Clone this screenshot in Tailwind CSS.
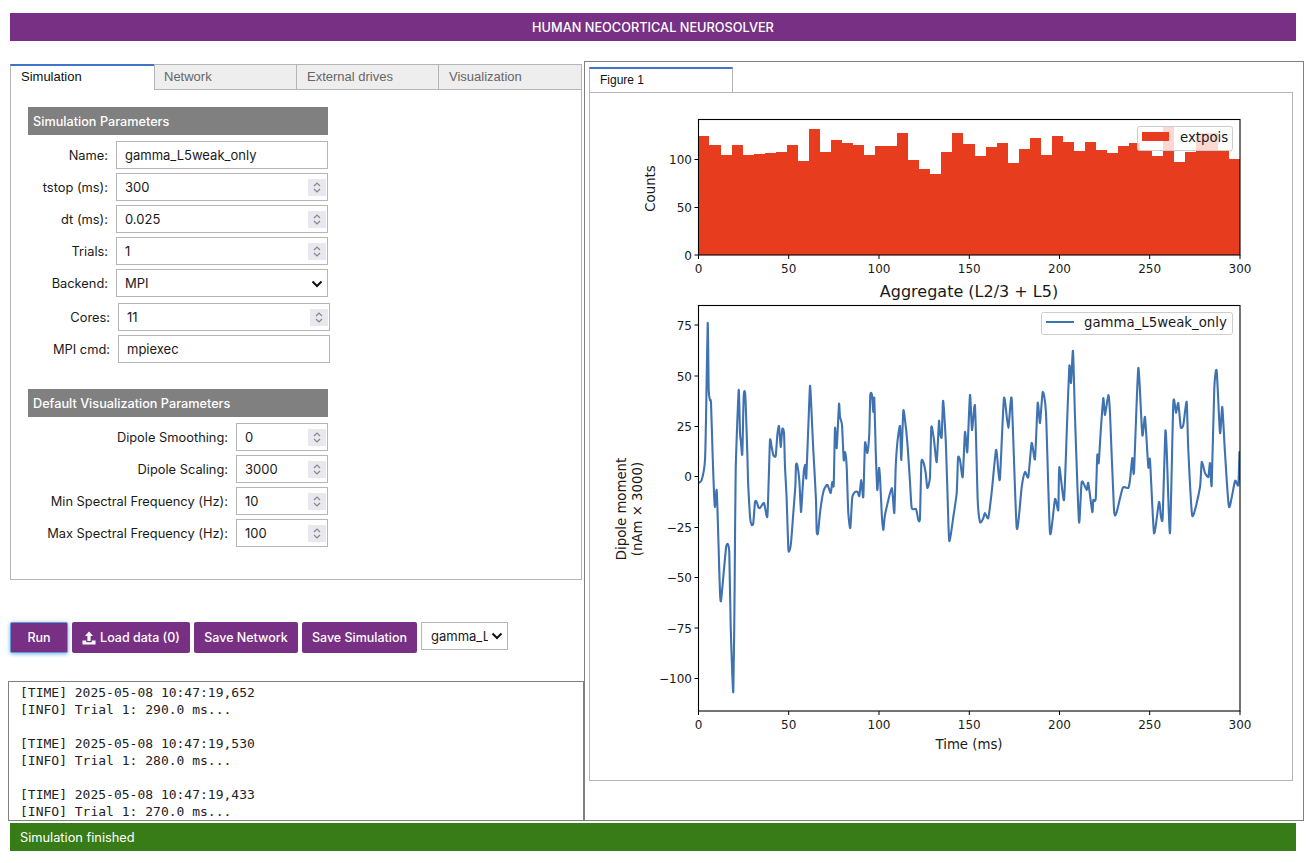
<!DOCTYPE html>
<html lang="en">
  <head>
    <script src="https://cdn.jsdelivr.net/npm/@tailwindcss/browser@4"></script>
    <meta charset="UTF-8" />
    <title>Human Neocortical Neurosolver</title>
  </head>
  <body class="bg-white text-[13px] text-[#1a1a1a]" style="font-family: Inter, 'Liberation Sans', sans-serif">
    <div class="w-[1310px] h-[863px] overflow-hidden flex flex-col">
      <!-- header -->
      <div class="mt-[13px] ml-[10px] w-[1286px] h-[28px] bg-[#783085] text-white font-medium flex items-center justify-center text-[12.75px] pt-px">HUMAN NEOCORTICAL NEUROSOLVER</div>

      <div class="flex h-[760px] mt-[20px]">
        <!-- left column -->
        <div class="w-[576px] ml-[8px] shrink-0 flex flex-col">
          <div class="ml-[2px] w-[572px] mt-[3px] h-[517px] flex flex-col">
            <div class="flex h-[26px] shrink-0 text-[#666]" style="font-family: 'Liberation Sans', sans-serif">
              <div class="w-[144px] border-t-2 border-t-[#3f74c8] border-l border-l-[#b5b5b5] pl-[10px] pt-[1px] text-[#111] bg-white">Simulation</div>
              <div class="w-[143px] bg-[#eeeeee] border border-[#b5b5b5] pl-[9px] pt-[2px]">Network</div>
              <div class="w-[142px] bg-[#eeeeee] border border-l-0 border-[#b5b5b5] pl-[10px] pt-[2px]">External drives</div>
              <div class="w-[143px] bg-[#eeeeee] border border-l-0 border-[#b5b5b5] pl-[10px] pt-[2px]">Visualization</div>
            </div>
            <div class="flex-1 border border-t-0 border-[#b5b5b5] pl-[17px] pt-[17px]">
              <div class="w-[300px] h-[28px] bg-[#808080] text-white font-medium flex items-center pl-[5px] pt-[2px] text-[12.7px]">Simulation Parameters</div>
              <div class="flex flex-col gap-[4px] mt-[6px]">
                <div class="flex items-center h-[28px]">
                  <div class="w-[88px] text-right pr-[8px] pt-px text-[12.85px]">Name:</div>
                  <div class="w-[212px] h-[28px] border border-[#b5b5b5] flex items-center pl-[8px] pt-px">gamma_L5weak_only</div>
                </div>
                <div class="flex items-center h-[28px]">
                  <div class="w-[88px] text-right pr-[8px] pt-px text-[12.85px]">tstop (ms):</div>
                  <div class="w-[212px] h-[28px] border border-[#b5b5b5] flex items-center justify-between pl-[8px] pr-[1px] pt-px">300
                    <div class="w-[18px] h-[17px] bg-[#e8e8ee] flex items-center justify-center"><svg width="10" height="15" viewBox="0 0 10 15" fill="none" stroke="#85858c" stroke-width="1.2"><path d="M2 6l3-3 3 3M2 9l3 3 3-3"/></svg></div>
                  </div>
                </div>
                <div class="flex items-center h-[28px]">
                  <div class="w-[88px] text-right pr-[8px] pt-px text-[12.85px]">dt (ms):</div>
                  <div class="w-[212px] h-[28px] border border-[#b5b5b5] flex items-center justify-between pl-[8px] pr-[1px] pt-px">0.025
                    <div class="w-[18px] h-[17px] bg-[#e8e8ee] flex items-center justify-center"><svg width="10" height="15" viewBox="0 0 10 15" fill="none" stroke="#85858c" stroke-width="1.2"><path d="M2 6l3-3 3 3M2 9l3 3 3-3"/></svg></div>
                  </div>
                </div>
                <div class="flex items-center h-[28px]">
                  <div class="w-[88px] text-right pr-[8px] pt-px text-[12.85px]">Trials:</div>
                  <div class="w-[212px] h-[28px] border border-[#b5b5b5] flex items-center justify-between pl-[8px] pr-[1px] pt-px">1
                    <div class="w-[18px] h-[17px] bg-[#e8e8ee] flex items-center justify-center"><svg width="10" height="15" viewBox="0 0 10 15" fill="none" stroke="#85858c" stroke-width="1.2"><path d="M2 6l3-3 3 3M2 9l3 3 3-3"/></svg></div>
                  </div>
                </div>
                <div class="flex items-center h-[28px]">
                  <div class="w-[88px] text-right pr-[8px] pt-px text-[12.85px]">Backend:</div>
                  <div class="w-[212px] h-[28px] border border-[#b5b5b5] flex items-center justify-between pl-[8px] pr-[4px] pt-px">MPI
                    <svg width="12" height="10" viewBox="0 0 12 10" fill="none" stroke="#111" stroke-width="2"><path d="M1.5 2.5L6 7l4.5-4.5"/></svg>
                  </div>
                </div>
                <div class="flex items-center h-[28px] mt-[2px]">
                  <div class="w-[90px] text-right pr-[8px] pt-px text-[12.85px]">Cores:</div>
                  <div class="w-[212px] h-[28px] border border-[#b5b5b5] flex items-center justify-between pl-[8px] pr-[1px] pt-px">11
                    <div class="w-[18px] h-[17px] bg-[#e8e8ee] flex items-center justify-center"><svg width="10" height="15" viewBox="0 0 10 15" fill="none" stroke="#85858c" stroke-width="1.2"><path d="M2 6l3-3 3 3M2 9l3 3 3-3"/></svg></div>
                  </div>
                </div>
                <div class="flex items-center h-[28px]">
                  <div class="w-[90px] text-right pr-[8px] pt-px text-[12.85px]">MPI cmd:</div>
                  <div class="w-[212px] h-[28px] border border-[#b5b5b5] flex items-center pl-[8px] pt-px">mpiexec</div>
                </div>
              </div>
              <div class="w-[300px] h-[28px] bg-[#808080] text-white font-medium flex items-center pl-[5px] pt-[2px] mt-[26px] text-[12.7px]">Default Visualization Parameters</div>
              <div class="flex flex-col gap-[4px] mt-[6px]">
                <div class="flex items-center h-[28px]">
                  <div class="w-[208px] text-right pr-[8px] pt-px text-[12.85px]">Dipole Smoothing:</div>
                  <div class="w-[92px] h-[28px] border border-[#b5b5b5] flex items-center justify-between pl-[8px] pr-[1px] pt-px">0
                    <div class="w-[18px] h-[17px] bg-[#e8e8ee] flex items-center justify-center"><svg width="10" height="15" viewBox="0 0 10 15" fill="none" stroke="#85858c" stroke-width="1.2"><path d="M2 6l3-3 3 3M2 9l3 3 3-3"/></svg></div>
                  </div>
                </div>
                <div class="flex items-center h-[28px]">
                  <div class="w-[208px] text-right pr-[8px] pt-px text-[12.85px]">Dipole Scaling:</div>
                  <div class="w-[92px] h-[28px] border border-[#b5b5b5] flex items-center justify-between pl-[8px] pr-[1px] pt-px">3000
                    <div class="w-[18px] h-[17px] bg-[#e8e8ee] flex items-center justify-center"><svg width="10" height="15" viewBox="0 0 10 15" fill="none" stroke="#85858c" stroke-width="1.2"><path d="M2 6l3-3 3 3M2 9l3 3 3-3"/></svg></div>
                  </div>
                </div>
                <div class="flex items-center h-[28px]">
                  <div class="w-[208px] text-right pr-[8px] pt-px text-[12.85px] whitespace-nowrap">Min Spectral Frequency (Hz):</div>
                  <div class="w-[92px] h-[28px] border border-[#b5b5b5] flex items-center justify-between pl-[8px] pr-[1px] pt-px">10
                    <div class="w-[18px] h-[17px] bg-[#e8e8ee] flex items-center justify-center"><svg width="10" height="15" viewBox="0 0 10 15" fill="none" stroke="#85858c" stroke-width="1.2"><path d="M2 6l3-3 3 3M2 9l3 3 3-3"/></svg></div>
                  </div>
                </div>
                <div class="flex items-center h-[28px]">
                  <div class="w-[208px] text-right pr-[8px] pt-px text-[12.85px] whitespace-nowrap">Max Spectral Frequency (Hz):</div>
                  <div class="w-[92px] h-[28px] border border-[#b5b5b5] flex items-center justify-between pl-[8px] pr-[1px] pt-px">100
                    <div class="w-[18px] h-[17px] bg-[#e8e8ee] flex items-center justify-center"><svg width="10" height="15" viewBox="0 0 10 15" fill="none" stroke="#85858c" stroke-width="1.2"><path d="M2 6l3-3 3 3M2 9l3 3 3-3"/></svg></div>
                  </div>
                </div>
              </div>
            </div>
          </div>

          <!-- buttons -->
          <div class="flex items-start gap-[4px] ml-[2px] mt-[42px] h-[31px] text-white font-medium text-[12.5px]">
            <div class="w-[58px] h-[31px] bg-[#783085] rounded-[2px] border border-[#5b9bd8] shadow-[0_1px_4px_#7ab0e8] flex items-center justify-center pt-[2px]">Run</div>
            <div class="w-[118px] h-[31px] bg-[#783085] rounded-[2px] flex items-center justify-center gap-[4px] pt-[2px]">
              <svg class="-mt-[2px]" width="14" height="14" viewBox="0 0 14 14" fill="#fff"><path d="M7 0.5L11 5H8.6V10H5.4V5H3zM0.5 9.5H4.2V11.2H9.8V9.5H13.5V13.5H0.5z"/></svg>
              Load data (0)
            </div>
            <div class="w-[104px] h-[31px] bg-[#783085] rounded-[2px] flex items-center justify-center pt-[2px]">Save Network</div>
            <div class="w-[115px] h-[31px] bg-[#783085] rounded-[2px] flex items-center justify-center pt-[2px]">Save Simulation</div>
            <div class="w-[87px] h-[28px] border border-[#b5b5b5] bg-white text-[#1a1a1a] font-normal text-[13px] flex items-center pl-[9px] pr-[4px] justify-between">
              <span class="w-[57px] overflow-hidden whitespace-nowrap pt-[2px]">gamma_L5weak_only</span>
              <svg width="12" height="10" viewBox="0 0 12 10" fill="none" stroke="#111" stroke-width="2"><path d="M1.5 2.5L6 7l4.5-4.5"/></svg>
            </div>
          </div>

          <!-- log -->
          <div class="mt-[28px] h-[140px] border border-[#808080] pl-[11px] pt-[2px] overflow-hidden text-[13px] leading-[17px] text-[#222] whitespace-pre" style="font-family: 'DejaVu Sans Mono', monospace">[TIME] 2025-05-08 10:47:19,652
[INFO] Trial 1: 290.0 ms...

[TIME] 2025-05-08 10:47:19,530
[INFO] Trial 1: 280.0 ms...

[TIME] 2025-05-08 10:47:19,433
[INFO] Trial 1: 270.0 ms...</div>
        </div>

        <!-- figure panel -->
        <div class="w-[720px] h-[760px] border border-[#808080] pl-[4px] pt-[5px]">
          <div class="w-[144px] h-[26px] border-t-2 border-t-[#3f74c8] border-x border-x-[#b5b5b5] pl-[10px] pt-[2px] text-[12px] text-[#111]" style="font-family: 'Liberation Sans', sans-serif">Figure 1</div>
          <div class="w-[704px] h-[689px] border border-[#b5b5b5] -mt-px">
            <svg class="block" width="702" height="687" viewBox="590 93 702 687" style="font-family: 'DejaVu Sans', sans-serif" font-size="12" fill="#1a1a1a">
              <defs><clipPath id="axes2"><rect x="698.5" y="305.5" width="541.5" height="405.5"/></clipPath></defs>
              <!-- histogram -->
              <g fill="#e83c1e">
                <path d="M698.5 255V136H709V145H721V155H732V145H743V155H754V154H765V153H776V152H787V145H798V161H809V129H820V152H831V140H842V143H853V145H864V155H875V146H886V146H897V133H908V160H919V169H930V174H941V152H952V133H963V144H975V156H986V147H997V143H1008V163H1019V149H1030V138H1041V155H1052V136H1063V142H1074V151H1085V142H1096V150H1107V153H1118V146H1129V143H1140V151H1152V156H1163V126H1174V162H1185V152H1196V133H1207V133H1218V150H1229V159H1240V255Z"/>
              </g>
              <rect x="698.5" y="119.5" width="541.5" height="135.5" fill="none" stroke="#000" stroke-width="1.1"/>
              <g stroke="#000" stroke-width="1">
                <path d="M698.5 255v4M788.7 255v4M879 255v4M969.3 255v4M1059.5 255v4M1149.7 255v4M1240 255v4M698.5 255h-4M698.5 207.5h-4M698.5 159.5h-4"/>
              </g>
              <g text-anchor="middle">
                <text x="698.5" y="273">0</text><text x="788.7" y="273">50</text><text x="879" y="273">100</text><text x="969.3" y="273">150</text><text x="1059.5" y="273">200</text><text x="1149.7" y="273">250</text><text x="1240" y="273">300</text>
              </g>
              <g text-anchor="end">
                <text x="692" y="259.5">0</text><text x="692" y="212">50</text><text x="692" y="164">100</text>
              </g>
              <text transform="translate(655 188.5) rotate(-90)" text-anchor="middle" font-size="13.3">Counts</text>
              <!-- legend -->
              <rect x="1137.5" y="126.5" width="95" height="24" rx="2" fill="#fff" fill-opacity="0.8" stroke="#ccc"/>
              <rect x="1142" y="132" width="27" height="9" fill="#e83c1e"/>
              <text x="1180" y="142" font-size="13.3">extpois</text>

              <!-- dipole -->
              <text x="969" y="297" text-anchor="middle" font-size="16">Aggregate (L2/3 + L5)</text>
              <path id="dipole" clip-path="url(#axes2)" fill="none" stroke="#3f72b0" stroke-width="2.1" stroke-linejoin="round"/>
              <rect x="698.5" y="305.5" width="541.5" height="405.5" fill="none" stroke="#000" stroke-width="1.1"/>
              <g stroke="#000" stroke-width="1">
                <path d="M698.5 711v4M788.7 711v4M879 711v4M969.3 711v4M1059.5 711v4M1149.7 711v4M1240 711v4M698.5 325h-4M698.5 376h-4M698.5 426.5h-4M698.5 476.5h-4M698.5 527.5h-4M698.5 577.5h-4M698.5 628h-4M698.5 678.5h-4"/>
              </g>
              <g text-anchor="middle">
                <text x="698.5" y="729">0</text><text x="788.7" y="729">50</text><text x="879" y="729">100</text><text x="969.3" y="729">150</text><text x="1059.5" y="729">200</text><text x="1149.7" y="729">250</text><text x="1240" y="729">300</text>
                <text x="969" y="749" font-size="13.3">Time (ms)</text>
              </g>
              <g text-anchor="end">
                <text x="692" y="329.5">75</text><text x="692" y="380.5">50</text><text x="692" y="431">25</text><text x="692" y="481">0</text><text x="692" y="532">−25</text><text x="692" y="582">−50</text><text x="692" y="632.5">−75</text><text x="692" y="683">−100</text>
              </g>
              <text transform="translate(626 509) rotate(-90)" text-anchor="middle" font-size="13.3">Dipole moment</text>
              <text transform="translate(642 509) rotate(-90)" text-anchor="middle" font-size="13.3">(nAm × 3000)</text>
              <rect x="1041.5" y="312.5" width="191" height="22" rx="2" fill="#fff" fill-opacity="0.8" stroke="#ccc"/>
              <path d="M1046 322h28" stroke="#3f72b0" stroke-width="2"/>
              <text x="1084" y="327" font-size="13.3">gamma_L5weak_only</text>
            </svg>
          </div>
        </div>
      </div>

      <!-- status -->
      <div class="mt-[2px] ml-[10px] w-[1286px] h-[28px] bg-[#377c16] text-white flex items-center pl-[10px] pt-px text-[12.8px]">Simulation finished</div>
    </div>

    <script>
      // dipole trace read off the plot, in page pixels, drawn as a light spline
      const raw = "698.5,483 701.7,480 705,460 706,420 707.7,323 708.7,390 710,400 711,403 712.7,457 714,493 715,507 716.7,490 718.3,537 720,593 721,601 723.3,577 726,548 727.7,544 729.3,553 730.7,627 733.3,692 734.7,580 735.7,470 738.7,390 740,433 741,442 742.3,454 743.7,396 745.3,395 747.3,453 748.3,487 750,517 751.7,525 753.3,523 755,502 756.7,502 758.3,507 760,508 764,503 767.3,517 768.7,480 770,440 771.7,447 773.3,455 775.7,456 777.3,435 779,426 780.7,447 782.3,429 784,433 785,467 786.7,500 788.3,548 789.3,551 791,543 793.3,513 795.3,487 796,465 797.3,465 799.3,480 801,512 802.7,487 804,470 805.3,465 806.3,478 808.3,427 810,386 811.3,407 813.3,450 816,500 816.7,532 818,533 820,513 823.3,492 826.7,485 828,486 830.7,493 832.3,482 833.7,485 835,428 836.7,448 839,404 840,417 842,425 843.7,460 845,452 846.7,467 848.3,513 850.3,528 852.3,497 855,492 857.7,492 859.3,496 861.3,480 863.3,497 865,443 867.3,453 869.3,433 870.3,395 872,395 873.3,412 874.3,398 875.7,450 877.3,490 879,468 880,477 881.7,513 883.3,530 885,515 891.7,488 894.3,513 895.7,467 897.3,443 900,426 901.3,460 903.3,411 905,420 907.3,442 910,482 911.7,508 916,509 918.3,520 920,518 921.3,463 923.3,462 925.7,473 927.3,488 930,477 931.3,427 934,440 936.7,462 939,421 940,433 941.7,437 943,401 944.3,415 946,447 947.7,500 949.3,541 953.3,517 956.7,493 958,458 960,460 962.7,477 965,432 967.3,452 970,395 972,430 975,406 977.7,500 980,522 983,519 985,513 988.3,518 991.7,492 996,450 998.3,470 1000,478 1004,398 1008.3,428 1011.7,399 1016.7,528 1021.7,487 1025,472 1028.3,477 1031.7,443 1035,459 1037.7,403 1040,423 1042.7,392 1046,413 1050,533 1055,499 1058.3,510 1059.3,467 1064,500 1066.7,433 1069.3,366 1071,383 1073,351 1075,417 1079,522 1081.7,482 1086.7,490 1088.3,483 1092.3,512 1093.3,500 1095.7,499 1097.3,455 1098.7,463 1101,427 1103.3,398 1105,415 1108.3,395 1110,413 1114,510 1116.7,512 1122.7,488 1128.3,488 1130,480 1132.3,458 1134,472 1138.3,368 1142.3,435 1145,417 1148.3,467 1150,460 1154,533 1159,502 1161,517 1162.7,517 1165.3,432 1166.7,450 1170,533 1173.3,403 1176,413 1178.3,403 1180.7,427 1183.3,425 1186.7,402 1188.3,450 1192.3,516 1200,487 1201.7,462 1205,473 1208.3,477 1210,463 1211.7,485 1214.3,388 1216.7,371 1220,433 1222.3,407 1225,453 1229,507 1235,481 1238.3,485 1239.5,452 1240,480";
      const pts = raw.split(" ").map((p) => p.split(",").map(Number));
      let d = `M${pts[0][0]} ${pts[0][1]}`;
      for (let i = 0; i < pts.length - 1; i++) {
        const p0 = pts[Math.max(i - 1, 0)];
        const p1 = pts[i];
        const p2 = pts[i + 1];
        const p3 = pts[Math.min(i + 2, pts.length - 1)];
        const k = 0.1;
        const c1 = [p1[0] + (p2[0] - p0[0]) * k, p1[1] + (p2[1] - p0[1]) * k];
        const c2 = [p2[0] - (p3[0] - p1[0]) * k, p2[1] - (p3[1] - p1[1]) * k];
        d += `C${c1[0].toFixed(1)} ${c1[1].toFixed(1)} ${c2[0].toFixed(1)} ${c2[1].toFixed(1)} ${p2[0]} ${p2[1]}`;
      }
      document.getElementById("dipole").setAttribute("d", d);
    </script>
  </body>
</html>
